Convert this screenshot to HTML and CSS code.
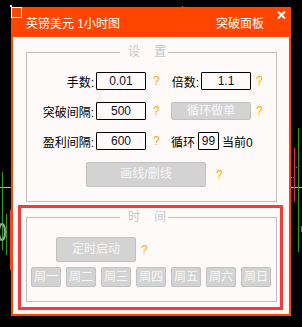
FILE: index.html
```html
<!DOCTYPE html>
<html lang="zh">
<head>
<meta charset="UTF-8">
<title>突破面板</title>
<link rel="stylesheet" href="styles.css">
</head>
<body>

<!-- chart behind the panel -->
<svg class="chart" width="302" height="327" viewBox="0 0 302 327">
    <line x1="0" y1="187.5" x2="11" y2="187.5" stroke="#b8b8b8" stroke-width="1"/>
    <line x1="2.5" y1="172" x2="2.5" y2="250" stroke="#1aa51a" stroke-width="1"/>
    <line x1="6.5" y1="214" x2="6.5" y2="255" stroke="#1aa51a" stroke-width="1"/>
    <line x1="10.5" y1="210" x2="10.5" y2="270" stroke="#ff3a3a" stroke-width="1"/>
    <ellipse cx="2" cy="232" rx="3" ry="8" fill="none" stroke="#9aa59a" stroke-width="2"/>
    <line x1="291" y1="187.5" x2="302" y2="187.5" stroke="#b8b8b8" stroke-width="1"/>
    <line x1="294.5" y1="148" x2="294.5" y2="202" stroke="#e8205a" stroke-width="1"/>
    <line x1="298.5" y1="128" x2="298.5" y2="252" stroke="#1aa51a" stroke-width="1"/>
    <line x1="294" y1="167.5" x2="298" y2="167.5" stroke="#c07090" stroke-width="1" stroke-dasharray="1 1"/>
    <line x1="291" y1="177.5" x2="294" y2="177.5" stroke="#c07090" stroke-width="1" stroke-dasharray="1 1"/>
    <line x1="301.5" y1="226" x2="301.5" y2="232" stroke="#ff3a3a" stroke-width="1"/>
    <rect x="182" y="6" width="1" height="1" fill="#ff3a3a"/>
</svg>

<div class="window">
    <div class="titlebar">
        <span class="corner"></span>
        <span class="title">英镑美元 1小时图</span>
        <span class="panel-name">突破面板</span>
        <svg class="close" width="9" height="8" viewBox="0 0 9 8">
            <path d="M1 0.5 L8 7.5 M8 0.5 L1 7.5" stroke="#fff" stroke-width="2"/>
        </svg>
    </div>

    <div class="body">
        <div class="group settings">
            <span class="legend">设 置</span>
            <div class="row">
                <span class="lbl">手数:</span>
                <span class="inp">0.01</span>
                <span class="q">?</span>
                <span class="lbl2">倍数:</span>
                <span class="inp">1.1</span>
                <span class="q end">?</span>
            </div>
            <div class="row">
                <span class="lbl">突破间隔:</span>
                <span class="inp">500</span>
                <span class="q">?</span>
                <span class="btn loop">循环做单</span>
                <span class="q end">?</span>
            </div>
            <div class="row">
                <span class="lbl">盈利间隔:</span>
                <span class="inp">600</span>
                <span class="q">?</span>
                <span class="loop-lbl">循环</span>
                <span class="inp small">99</span>
                <span class="current">当前0</span>
            </div>
            <div class="row tall">
                <span class="btn draw">画线/删线</span>
                <span class="q draw-q">?</span>
            </div>
        </div>

        <div class="alarm">
            <div class="group time">
                <span class="legend">时 间</span>
                <div class="row tall">
                    <span class="btn timer">定时启动</span>
                    <span class="q timer-q">?</span>
                </div>
                <div class="days">
                    <span class="btn day">周一</span>
                    <span class="btn day">周二</span>
                    <span class="btn day">周三</span>
                    <span class="btn day">周四</span>
                    <span class="btn day">周五</span>
                    <span class="btn day">周六</span>
                    <span class="btn day">周日</span>
                </div>
            </div>
        </div>
    </div>
</div>

</body>
</html>
```

FILE: styles.css
```css
body {
    margin: 0;
    width: 302px;
    height: 327px;
    position: relative;
    overflow: hidden;
    background: #000;
    font-family: "Liberation Sans", "Noto Sans CJK SC", sans-serif;
    font-size: 12px;
    color: #000;
}

.chart {
    position: absolute;
    left: 0;
    top: 0;
}

.window {
    position: absolute;
    left: 11px;
    top: 7px;
    width: 280px;
    height: 309px;
    box-sizing: border-box;
    padding: 0 2px 2px;
    background: #ff4500;
    display: flex;
    flex-direction: column;
}

.titlebar {
    position: relative;
    height: 30px;
    display: flex;
    align-items: center;
    padding-left: 13px;
    color: #fff;
}

.corner {
    position: absolute;
    left: -2px;
    top: 0;
    width: 9px;
    height: 9px;
    border: 1px solid #fff;
}

.corner::before {
    content: "";
    position: absolute;
    left: -2px;
    top: -3px;
    width: 2px;
    height: 2px;
    background: #fff;
}

.panel-name {
    margin-left: auto;
    margin-right: 25px;
}

.close {
    position: absolute;
    right: 3px;
    top: 4px;
}

.body {
    flex: 1;
    background: #fffafa;
    padding: 15px 0 0 13px;
}

.group {
    position: relative;
    width: 251px;
    box-sizing: border-box;
    border: 1px solid #c0c0c0;
}

.legend {
    position: absolute;
    top: -9px;
    left: 93px;
    padding: 0 2px 0 8px;
    line-height: 16px;
    background: #fffafa;
    color: #c6c6c6;
    word-spacing: 11px;
    text-shadow: 1px 1px 0 #fff;
}

.settings {
    height: 150px;
    padding-top: 19px;
}

.row {
    display: flex;
    align-items: center;
    height: 18px;
    margin-bottom: 12px;
}

.row.tall {
    height: 25px;
}

.lbl {
    width: 67px;
    text-align: right;
}

.lbl2 {
    width: 28px;
    text-align: right;
}

.inp {
    width: 50px;
    height: 18px;
    box-sizing: border-box;
    margin-left: 2px;
    border: 1px solid #000;
    border-radius: 1px;
    line-height: 16px;
    text-align: center;
    color: #10102a;
}

.inp.small {
    width: 21px;
    margin-left: 3px;
}

.q {
    width: 25px;
    box-sizing: border-box;
    padding-left: 7px;
    color: #ffa500;
}

.q.end {
    width: auto;
    padding-left: 5px;
}

.loop-lbl {
    width: 24px;
}

.current {
    margin-left: 3px;
}

.btn {
    box-sizing: border-box;
    height: 18px;
    background: #d3d3d3;
    border: 1px solid #c2c2c2;
    border-radius: 2px;
    color: #f7f7f7;
    text-align: center;
    line-height: 16px;
}

.loop {
    width: 80px;
}

.draw {
    width: 120px;
    height: 25px;
    line-height: 23px;
    margin-left: 59px;
}

.q.draw-q {
    padding-left: 10px;
}

.alarm {
    width: 265px;
    height: 105px;
    box-sizing: border-box;
    margin: 3px 0 0 -8px;
    padding: 9px 0 0 5px;
    border: 3px solid #ff3636;
}

.time {
    height: 85px;
    padding-top: 19px;
}

.time .row {
    margin-bottom: 5px;
}

.timer {
    width: 80px;
    height: 25px;
    line-height: 23px;
    margin-left: 29px;
}

.q.timer-q {
    padding-left: 5px;
}

.days {
    display: flex;
    gap: 5px;
    padding-left: 4px;
}

.day {
    width: 30px;
    height: 20px;
    line-height: 18px;
}
```
